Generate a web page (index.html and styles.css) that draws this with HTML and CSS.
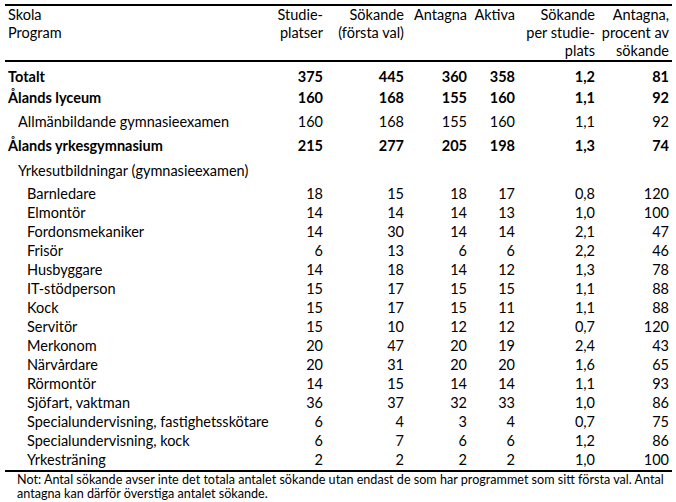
FILE: index.html
```html
<!DOCTYPE html>
<html lang="sv">
<head>
<meta charset="utf-8">
<title>Studieplatser</title>
<link rel="stylesheet" href="styles.css">
</head>
<body>
<div class="page">
<table class="stats">
<colgroup>
<col class="w0"><col class="w1"><col class="w2"><col class="w3"><col class="w4"><col class="w5"><col class="w6">
</colgroup>
<thead>
<tr>
<th class="name">Skola<br>Program</th>
<th>Studie-<br>platser</th>
<th>Sökande<br>(första val)</th>
<th>Antagna</th>
<th>Aktiva</th>
<th>Sökande<br>per studie-<br>plats</th>
<th>Antagna,<br>procent av<br>sökande</th>
</tr>
</thead>
<tbody>
<tr class="bold r25"><td class="name">Totalt</td><td>375</td><td>445</td><td>360</td><td>358</td><td>1,2</td><td>81</td></tr>
<tr class="bold r21"><td class="name">Ålands lyceum</td><td>160</td><td>168</td><td>155</td><td>160</td><td>1,1</td><td>92</td></tr>
<tr class="r24"><td class="name l1">Allmänbildande gymnasieexamen</td><td>160</td><td>168</td><td>155</td><td>160</td><td>1,1</td><td>92</td></tr>
<tr class="bold r24"><td class="name">Ålands yrkesgymnasium</td><td>215</td><td>277</td><td>205</td><td>198</td><td>1,3</td><td>74</td></tr>
<tr class="r25"><td class="name l1">Yrkesutbildningar (gymnasieexamen)</td><td></td><td></td><td></td><td></td><td></td><td></td></tr>
<tr class="r23"><td class="name l2">Barnledare</td><td>18</td><td>15</td><td>18</td><td>17</td><td>0,8</td><td>120</td></tr>
<tr class="r19"><td class="name l2">Elmontör</td><td>14</td><td>14</td><td>14</td><td>13</td><td>1,0</td><td>100</td></tr>
<tr class="r19"><td class="name l2">Fordonsmekaniker</td><td>14</td><td>30</td><td>14</td><td>14</td><td>2,1</td><td>47</td></tr>
<tr class="r19"><td class="name l2">Frisör</td><td>6</td><td>13</td><td>6</td><td>6</td><td>2,2</td><td>46</td></tr>
<tr class="r19"><td class="name l2">Husbyggare</td><td>14</td><td>18</td><td>14</td><td>12</td><td>1,3</td><td>78</td></tr>
<tr class="r19"><td class="name l2">IT-stödperson</td><td>15</td><td>17</td><td>15</td><td>15</td><td>1,1</td><td>88</td></tr>
<tr class="r19"><td class="name l2">Kock</td><td>15</td><td>17</td><td>15</td><td>11</td><td>1,1</td><td>88</td></tr>
<tr class="r19"><td class="name l2">Servitör</td><td>15</td><td>10</td><td>12</td><td>12</td><td>0,7</td><td>120</td></tr>
<tr class="r19"><td class="name l2">Merkonom</td><td>20</td><td>47</td><td>20</td><td>19</td><td>2,4</td><td>43</td></tr>
<tr class="r19"><td class="name l2">Närvårdare</td><td>20</td><td>31</td><td>20</td><td>20</td><td>1,6</td><td>65</td></tr>
<tr class="r19"><td class="name l2">Rörmontör</td><td>14</td><td>15</td><td>14</td><td>14</td><td>1,1</td><td>93</td></tr>
<tr class="r19"><td class="name l2">Sjöfart, vaktman</td><td>36</td><td>37</td><td>32</td><td>33</td><td>1,0</td><td>86</td></tr>
<tr class="r19"><td class="name l2">Specialundervisning, fastighetsskötare</td><td>6</td><td>4</td><td>3</td><td>4</td><td>0,7</td><td>75</td></tr>
<tr class="r19"><td class="name l2">Specialundervisning, kock</td><td>6</td><td>7</td><td>6</td><td>6</td><td>1,2</td><td>86</td></tr>
<tr class="r19 last"><td class="name l2">Yrkesträning</td><td>2</td><td>2</td><td>2</td><td>2</td><td>1,0</td><td>100</td></tr>
</tbody>
</table>
<p class="note">Not: Antal sökande avser inte det totala antalet sökande utan endast de som har programmet som sitt första val. Antal antagna kan därför överstiga antalet sökande.</p>
</div>
</body>
</html>
```

FILE: styles.css
```css
html, body {
  margin: 0;
  padding: 0;
  background: #ffffff;
}

.page {
  padding: 4px 4px 0 5px;
  font-family: Lato, "Liberation Sans", sans-serif;
  color: #000000;
}

.stats {
  width: 667px;
  table-layout: fixed;
  border-collapse: separate;
  border-spacing: 0;
  border-top: 2px solid #000000;
  font-size: 14.5px;
}

.w0 { width: 265px; }
.w1 { width: 56px; }
.w2 { width: 81px; }
.w3 { width: 63px; }
.w4 { width: 48px; }
.w5 { width: 80px; }
.w6 { width: 74px; }

.stats th {
  font-weight: normal;
  text-align: right;
  vertical-align: top;
  line-height: 18px;
  height: 54px;
  padding: 0 3px 0 0;
  border-bottom: 2px solid #000000;
  white-space: nowrap;
}

.stats td {
  text-align: right;
  vertical-align: bottom;
  line-height: 17px;
  padding: 0 3px 2px 0;
  white-space: nowrap;
}

.stats th.name,
.stats td.name {
  text-align: left;
  padding-left: 3px;
}

.stats td.l1 { padding-left: 13px; }
.stats td.l2 { padding-left: 22px; }

.bold td { font-weight: bold; }

.r25 td { height: 23px; }
.r24 td { height: 22px; }
.r23 td { height: 21px; }
.r21 td { height: 19px; }
.r19 td { height: 17px; }

.last td { border-bottom: 2px solid #000000; }

.note {
  margin: 1px 0 0 0;
  padding-left: 12px;
  font-size: 12.6px;
  line-height: 14px;
  width: 658px;
}
```
